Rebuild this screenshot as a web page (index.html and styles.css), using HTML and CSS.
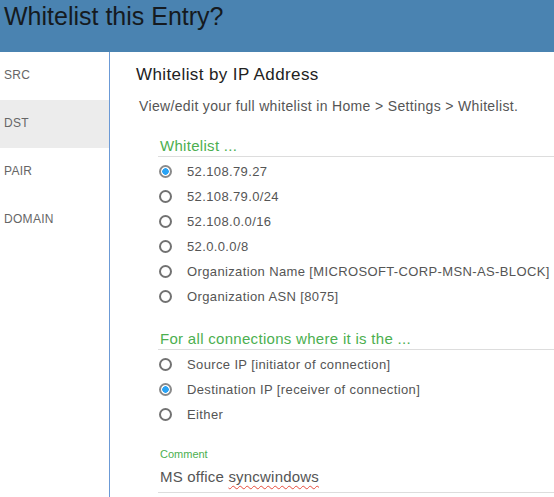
FILE: index.html
```html
<!DOCTYPE html>
<html>
<head>
<meta charset="utf-8">
<link rel="stylesheet" href="styles.css">
</head>
<body>
<div class="header"><h1 class="title">Whitelist this Entry?</h1></div>
<div class="body">
  <nav class="side">
    <div class="tab">SRC</div>
    <div class="tab active">DST</div>
    <div class="tab">PAIR</div>
    <div class="tab">DOMAIN</div>
  </nav>
  <main class="main">
    <h2 class="heading">Whitelist by IP Address</h2>
    <p class="hint">View/edit your full whitelist in Home &gt; Settings &gt; Whitelist.</p>
    <div class="group">
      <div class="group-title">Whitelist ...</div>
      <label class="opt"><span class="radio checked"></span>52.108.79.27</label>
      <label class="opt"><span class="radio"></span>52.108.79.0/24</label>
      <label class="opt"><span class="radio"></span>52.108.0.0/16</label>
      <label class="opt"><span class="radio"></span>52.0.0.0/8</label>
      <label class="opt"><span class="radio"></span>Organization Name [MICROSOFT-CORP-MSN-AS-BLOCK]</label>
      <label class="opt"><span class="radio"></span>Organization ASN [8075]</label>
    </div>
    <div class="group group2">
      <div class="group-title">For all connections where it is the ...</div>
      <label class="opt"><span class="radio"></span>Source IP [initiator of connection]</label>
      <label class="opt"><span class="radio checked"></span>Destination IP [receiver of connection]</label>
      <label class="opt"><span class="radio"></span>Either</label>
    </div>
    <div class="comment">
      <div class="comment-label">Comment</div>
      <div class="comment-value">MS office <span class="spell">syncwindows</span></div>
    </div>
  </main>
</div>
</body>
</html>
```
FILE: styles.css
```css
html, body {
  margin: 0;
  padding: 0;
  background: #fff;
  overflow: hidden;
}
body {
  font-family: "Liberation Sans", Arial, sans-serif;
  color: #555;
  width: 554px;
  height: 497px;
}
.header {
  background: #4a83b1;
  height: 52px;
  padding: 0 0 0 4px;
}
.title {
  margin: 0;
  font-size: 25px;
  font-weight: normal;
  color: #151a20;
  line-height: 30px;
  padding-top: 1px;
}
.body {
  display: flex;
  height: 445px;
}
.side {
  width: 109px;
  border-right: 1px solid #6b9ad6;
  flex: none;
}
.tab {
  height: 48px;
  line-height: 46px;
  padding-left: 4px;
  font-size: 12px;
  letter-spacing: 0.3px;
  color: #666;
}
.tab.active {
  background: #ececec;
}
.main {
  flex: 1;
  padding-left: 26px;
  min-width: 0;
  white-space: nowrap;
}
.heading {
  margin: 0;
  padding-top: 12px;
  font-size: 17px;
  letter-spacing: 0.4px;
  font-weight: normal;
  color: #222;
  line-height: 22px;
}
.hint {
  margin: 11px 0 0 3px;
  font-size: 14px;
  letter-spacing: 0.34px;
  line-height: 18px;
  color: #555;
}
.group {
  margin-left: 22px;
  margin-top: 22px;
}
.group2 {
  margin-top: 21px;
}
.group-title {
  font-size: 15px;
  letter-spacing: 0.3px;
  color: #4caf50;
  line-height: 18px;
  padding-left: 2px;
  border-bottom: 1px solid #ddd;
  padding-bottom: 1px;
  margin-bottom: 2px;
}
.opt {
  display: flex;
  align-items: center;
  height: 25px;
  font-size: 13px;
  color: #555;
  letter-spacing: 0.37px;
}
.radio {
  box-sizing: border-box;
  width: 13px;
  height: 13px;
  border: 2px solid #727272;
  border-radius: 50%;
  margin: 0 15px 0 1px;
  flex: none;
  background: #fff;
}
.radio.checked {
  border-color: #8a8a8a;
  background: radial-gradient(circle, #29a3f5 0 3px, #fff 3.5px);
}
.comment {
  margin-left: 22px;
  margin-top: 20px;
}
.comment-label {
  font-size: 11px;
  color: #4caf50;
  line-height: 14px;
  padding-left: 2px;
}
.comment-value {
  font-size: 15px;
  letter-spacing: 0.2px;
  color: #555;
  line-height: 22px;
  padding: 5px 0 4px 2px;
  border-bottom: 1px solid #ddd;
}
.spell {
  text-decoration: underline wavy #e74c3c;
  text-decoration-thickness: 1px;
  text-underline-offset: 3px;
}
```
